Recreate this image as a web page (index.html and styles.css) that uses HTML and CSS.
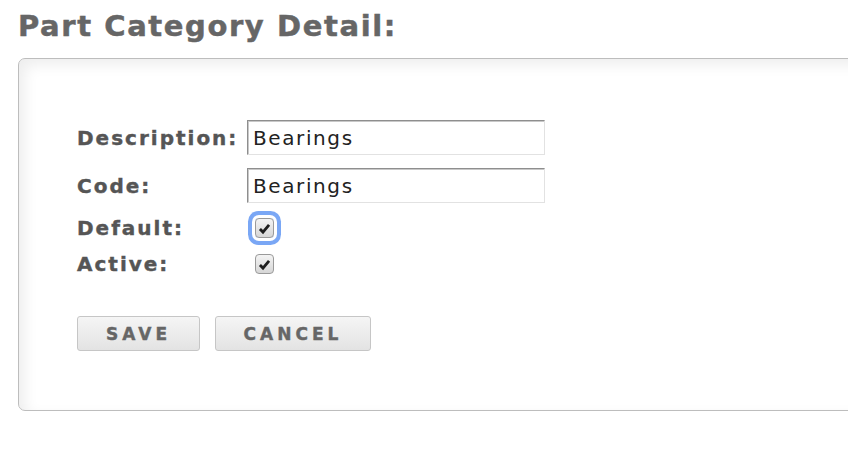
FILE: index.html
```html
<!DOCTYPE html>
<html>
<head>
<meta charset="utf-8">
<link rel="stylesheet" href="styles.css">
</head>
<body>
<h1 class="title">Part Category Detail:</h1>
<div class="panel">
  <form class="form">
    <div class="row row-text">
      <label class="label">Description:</label>
      <input class="field" type="text" value="Bearings">
    </div>
    <div class="row row-text">
      <label class="label">Code:</label>
      <input class="field" type="text" value="Bearings">
    </div>
    <div class="row row-check">
      <label class="label">Default:</label>
      <span class="check focused">
        <svg viewBox="0 0 12 12" width="13" height="13"><path d="M1.8 6.4 L4.6 9.3 L10.2 2.6" fill="none" stroke="#1e1e1e" stroke-width="2.6" stroke-linejoin="miter"/></svg>
      </span>
    </div>
    <div class="row row-check">
      <label class="label">Active:</label>
      <span class="check">
        <svg viewBox="0 0 12 12" width="13" height="13"><path d="M1.8 6.4 L4.6 9.3 L10.2 2.6" fill="none" stroke="#1e1e1e" stroke-width="2.6" stroke-linejoin="miter"/></svg>
      </span>
    </div>
    <div class="buttons">
      <button type="button" class="btn btn-save">SAVE</button>
      <button type="button" class="btn btn-cancel">CANCEL</button>
    </div>
  </form>
</div>
</body>
</html>
```

FILE: styles.css
```css
html, body {
  margin: 0;
  padding: 0;
  background: #fff;
  overflow: hidden;
}
body {
  font-family: "DejaVu Sans", Verdana, sans-serif;
  width: 848px;
  height: 460px;
}
.title {
  box-sizing: border-box;
  margin: 0;
  padding: 12px 0 0 18px;
  font-size: 29px;
  line-height: 29px;
  font-weight: bold;
  letter-spacing: 1.6px;
  -webkit-text-stroke: 0.5px #666;
  color: #666;
  height: 58px;
}
.panel {
  box-sizing: border-box;
  margin-left: 18px;
  width: 900px;
  height: 353px;
  border: 1px solid #bdbdbd;
  border-radius: 7px;
  background: #fff;
  box-shadow: inset 6px 6px 14px rgba(0,0,0,0.07);
  padding: 61px 0 0 58px;
}
.form {
  display: flex;
  flex-direction: column;
}
.row {
  display: flex;
  align-items: center;
}
.row-text {
  height: 35px;
  margin-bottom: 13px;
}
.row-text + .row-check {
  margin-top: -6px;
}
.row-check {
  height: 36px;
}
.label {
  width: 170px;
  font-size: 20px;
  font-weight: bold;
  letter-spacing: 2px;
  -webkit-text-stroke: 0.4px #555;
  color: #555;
}
.field {
  box-sizing: border-box;
  width: 298px;
  height: 35px;
  margin: 0;
  padding: 0 0 0 5px;
  font-family: "DejaVu Sans", Verdana, sans-serif;
  font-size: 20px;
  letter-spacing: 1.6px;
  color: #222;
  border-style: solid;
  border-width: 1px;
  border-color: #8e8e8e #e2e2e2 #e2e2e2 #8e8e8e;
  box-shadow: inset 1px 1px 0 #c8c8c8;
  outline: none;
}
.check {
  box-sizing: border-box;
  width: 19px;
  height: 20px;
  margin-left: 8px;
  border: 1px solid #9a9a9a;
  border-radius: 4px;
  background: linear-gradient(#f4f4f4, #d6d6d6);
  display: flex;
  align-items: center;
  justify-content: center;
}
.check.focused {
  box-shadow: 0 0 0 3px #fff, 0 0 0 7px #7aa7f5;
}
.check svg {
  display: block;
}
.buttons {
  display: flex;
  gap: 15px;
  margin-top: 34px;
}
.btn {
  box-sizing: border-box;
  height: 35px;
  padding: 0;
  border: 1px solid #c6c6c6;
  border-radius: 3px;
  background: linear-gradient(#f5f5f5, #e3e3e3);
  font-family: "DejaVu Sans", Verdana, sans-serif;
  font-weight: bold;
  font-size: 17px;
  letter-spacing: 4px;
  -webkit-text-stroke: 0.4px #666;
  color: #666;
  text-align: center;
}
.btn-save {
  width: 123px;
}
.btn-cancel {
  width: 156px;
}
```
